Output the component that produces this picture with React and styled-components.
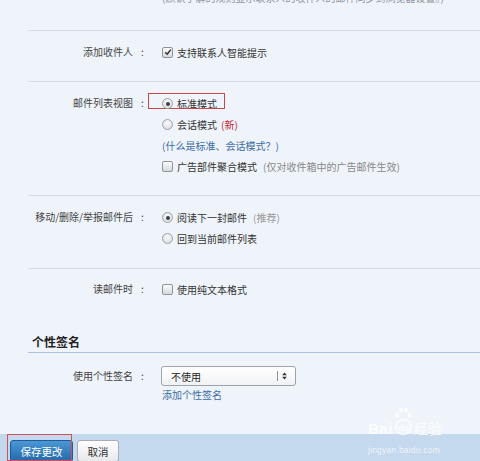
import React from 'react';
import styled, { createGlobalStyle } from 'styled-components';

const Global = createGlobalStyle`
  html, body { margin: 0; padding: 0; overflow: hidden; background: #eff3fa; }
  body {
    font-family: "Noto Sans CJK SC", "Liberation Sans", sans-serif;
    font-size: 10px;
    color: #333;
  }
`;

const Page = styled.div`
  position: relative;
  width: 480px;
  height: 461px;
  display: flex;
  flex-direction: column;
  overflow: hidden;
  background: #eff3fa;
`;

const Content = styled.div`
  flex: 1;
  margin-left: 28px;
`;

const Section = styled.div`
  display: grid;
  grid-template-columns: 120px 1fr;
  column-gap: 14px;
  border-top: ${p => (p.$noLine ? 'none' : '1px solid #d3dbe6')};
  margin-top: ${p => p.$mt || '0'};
  padding: ${p => p.$pad || '11px 0 19px'};
`;

const Label = styled.div`
  display: flex;
  justify-content: flex-end;
  line-height: 20px;
  color: #444;
  white-space: nowrap;
`;

const Colon = styled.span`
  display: inline-block;
  width: 15px;
  padding-left: 4px;
  box-sizing: border-box;
  text-align: center;
`;

const Controls = styled.div`
  display: flex;
  flex-direction: column;
`;

const Row = styled.div`
  position: relative;
  display: flex;
  align-items: center;
  gap: 4px;
  height: ${p => p.$h || 21}px;
  white-space: nowrap;
`;

const Hint = styled.span`
  color: ${p => p.$c || '#888'};
  margin-left: ${p => p.$ml || 0}px;
`;

const LinkText = styled.span`
  color: #3a6ca6;
`;

const TopNote = styled.div`
  color: #9096a0;
  line-height: 20px;
  white-space: nowrap;
`;

const RadioDot = styled.span`
  position: relative;
  flex: none;
  width: 9px;
  height: 9px;
  border-radius: 50%;
  border: 1px solid #9aa2ac;
  background: radial-gradient(circle at 50% 35%, #fbfbfb 0%, #d3d6da 100%);
  &::after {
    content: '';
    display: ${p => (p.$on ? 'block' : 'none')};
    position: absolute;
    left: 2.5px;
    top: 2.5px;
    width: 4px;
    height: 4px;
    border-radius: 50%;
    background: #3c3f44;
  }
`;

const CheckBox = styled.span`
  flex: none;
  width: 9px;
  height: 9px;
  border: 1px solid #8e949b;
  border-radius: 2px;
  background: linear-gradient(#fbfbfb, #d6d9dd);
  display: flex;
  align-items: center;
  justify-content: center;
`;

const Mark = styled.span`
  position: absolute;
  left: -14px;
  top: 0;
  width: 75px;
  height: 14px;
  border: 1px solid #c9474f;
  pointer-events: none;
`;

const Heading = styled.div`
  margin-top: 35px;
  padding: 0 0 2px 4px;
  font-size: 12px;
  font-weight: bold;
  line-height: 16px;
  color: #222;
  border-bottom: 1px solid #a9c1da;
`;

const SelectBox = styled.div`
  margin-left: -1px;
  width: 124px;
  height: 18px;
  border: 1px solid #9da3aa;
  border-radius: 3px;
  background: linear-gradient(#ffffff, #f1f2f4);
  display: flex;
  align-items: center;
  padding-left: 9px;
  box-sizing: content-box;
`;

const SelectText = styled.span`
  flex: 1;
  color: #222;
`;

const SelectArrow = styled.span`
  display: flex;
  align-items: center;
  gap: 4px;
  padding-right: 8px;
`;

const Divider = styled.span`
  width: 1px;
  height: 10px;
  background: #8a9099;
`;

const Bar = styled.div`
  height: 27px;
  background: #c4d8ee;
  display: flex;
  align-items: flex-start;
  gap: 4px;
  padding: 6px 0 0 10px;
  box-sizing: border-box;
`;

const ButtonWrap = styled.div`
  position: relative;
`;

const Button = styled.div`
  height: 22px;
  padding: 0;
  border-radius: 3px;
  display: flex;
  align-items: center;
  justify-content: center;
  font-size: 10.5px;
  white-space: nowrap;
  box-sizing: border-box;
  width: ${p => p.$w}px;
  color: ${p => (p.$primary ? '#fff' : '#333')};
  border: 1px solid ${p => (p.$primary ? '#1d5c98' : '#a9adb3')};
  background: ${p =>
    p.$primary
      ? 'linear-gradient(#4b97d5, #2569ab)'
      : 'linear-gradient(#ffffff, #e6e8eb)'};
`;

const SaveMark = styled.span`
  position: absolute;
  left: -3px;
  top: -6px;
  width: 63px;
  height: 25px;
  border: 1px solid #cf5158;
  pointer-events: none;
`;

const Watermark = styled.div`
  position: absolute;
  left: 368px;
  top: 406px;
  display: flex;
  flex-direction: column;
  align-items: flex-start;
  color: rgba(255, 255, 255, 0.85);
  pointer-events: none;
`;

const WmTop = styled.div`
  display: flex;
  align-items: flex-end;
  gap: 1px;
`;

const WmBai = styled.span`
  font-family: "Liberation Sans", sans-serif;
  font-weight: bold;
  font-size: 15px;
  line-height: 15px;
  letter-spacing: 0.5px;
`;

const WmJy = styled.span`
  font-size: 14px;
  line-height: 15px;
  margin-left: 1px;
`;

const WmUrl = styled.span`
  font-family: "Liberation Sans", sans-serif;
  font-size: 8.5px;
  line-height: 10px;
  margin-top: 9px;
  color: rgba(255, 255, 255, 0.75);
  letter-spacing: 0.2px;
`;

const Radio = ({ on, children }) => (
  <>
    <RadioDot $on={on} />
    {children}
  </>
);

const FieldLabel = ({ children }) => (
  <Label>
    {children}
    <Colon>:</Colon>
  </Label>
);

const CheckIcon = () => (
  <svg width="8" height="8" viewBox="0 0 8 8">
    <path d="M1.2 4.2 L3.2 6.2 L6.8 1.6" fill="none" stroke="#333" strokeWidth="1.5" />
  </svg>
);

const UpDown = () => (
  <svg width="5" height="8" viewBox="0 0 5 8">
    <path d="M2.5 0.5 L4.8 3.2 L0.2 3.2 Z M2.5 7.5 L4.8 4.8 L0.2 4.8 Z" fill="#333" />
  </svg>
);

const Paw = () => (
  <svg width="18" height="30" viewBox="0 0 18 30">
    <g fill="rgba(255,255,255,0.85)">
      <ellipse cx="3" cy="9" rx="2" ry="2.6" />
      <ellipse cx="7" cy="4" rx="2" ry="2.6" />
      <ellipse cx="12" cy="4" rx="2" ry="2.6" />
      <ellipse cx="15.5" cy="9" rx="2" ry="2.6" />
    </g>
    <circle cx="9.5" cy="21" r="7.5" fill="none" stroke="rgba(255,255,255,0.85)" strokeWidth="1.5" />
    <text x="9.5" y="24.5" textAnchor="middle" fontFamily="Liberation Sans, sans-serif" fontWeight="bold" fontSize="9" fill="rgba(255,255,255,0.9)">du</text>
  </svg>
);

export default function App() {
  return (
    <Page>
      <Global />
      <Content>
        <Section $noLine $mt="-12px" $pad="0 0 22px">
          <Label />
          <TopNote>(默认了解的规则显示联系人的收件人的邮件同步到浏览器设置。)</TopNote>
        </Section>

        <Section>
          <FieldLabel>添加收件人</FieldLabel>
          <Controls>
            <Row $h={20}>
              <CheckBox><CheckIcon /></CheckBox>
              支持联系人智能提示
            </Row>
          </Controls>
        </Section>

        <Section $pad="11px 0 18px">
          <FieldLabel>邮件列表视图</FieldLabel>
          <Controls>
            <Row>
              <Mark />
              <Radio on>标准模式</Radio>
            </Row>
            <Row>
              <Radio>会话模式<Hint $c="#c0282d">(新)</Hint></Radio>
            </Row>
            <Row>
              <LinkText>(什么是标准、会话模式？)</LinkText>
            </Row>
            <Row>
              <CheckBox />
              广告部件聚合模式<Hint $ml={2}>(仅对收件箱中的广告邮件生效)</Hint>
            </Row>
          </Controls>
        </Section>

        <Section>
          <FieldLabel>移动/删除/举报邮件后</FieldLabel>
          <Controls>
            <Row>
              <Radio on>阅读下一封邮件<Hint $c="#999" $ml={2}>(推荐)</Hint></Radio>
            </Row>
            <Row>
              <Radio>回到当前邮件列表</Radio>
            </Row>
          </Controls>
        </Section>

        <Section $pad="10px 0 0">
          <FieldLabel>读邮件时</FieldLabel>
          <Controls>
            <Row $h={20}>
              <CheckBox />
              使用纯文本格式
            </Row>
          </Controls>
        </Section>

        <Heading>个性签名</Heading>

        <Section $noLine $pad="13px 0 0">
          <FieldLabel>使用个性签名</FieldLabel>
          <Controls>
            <SelectBox>
              <SelectText>不使用</SelectText>
              <SelectArrow>
                <Divider />
                <UpDown />
              </SelectArrow>
            </SelectBox>
            <Row $h={16}>
              <LinkText>添加个性签名</LinkText>
            </Row>
          </Controls>
        </Section>
      </Content>

      <Bar>
        <ButtonWrap>
          <Button $primary $w={63}>保存更改</Button>
          <SaveMark />
        </ButtonWrap>
        <Button $w={42}>取消</Button>
      </Bar>

      <Watermark>
        <WmTop>
          <WmBai>Bai</WmBai>
          <Paw />
          <WmJy>经验</WmJy>
        </WmTop>
        <WmUrl>jingyan.baidu.com</WmUrl>
      </Watermark>
    </Page>
  );
}
